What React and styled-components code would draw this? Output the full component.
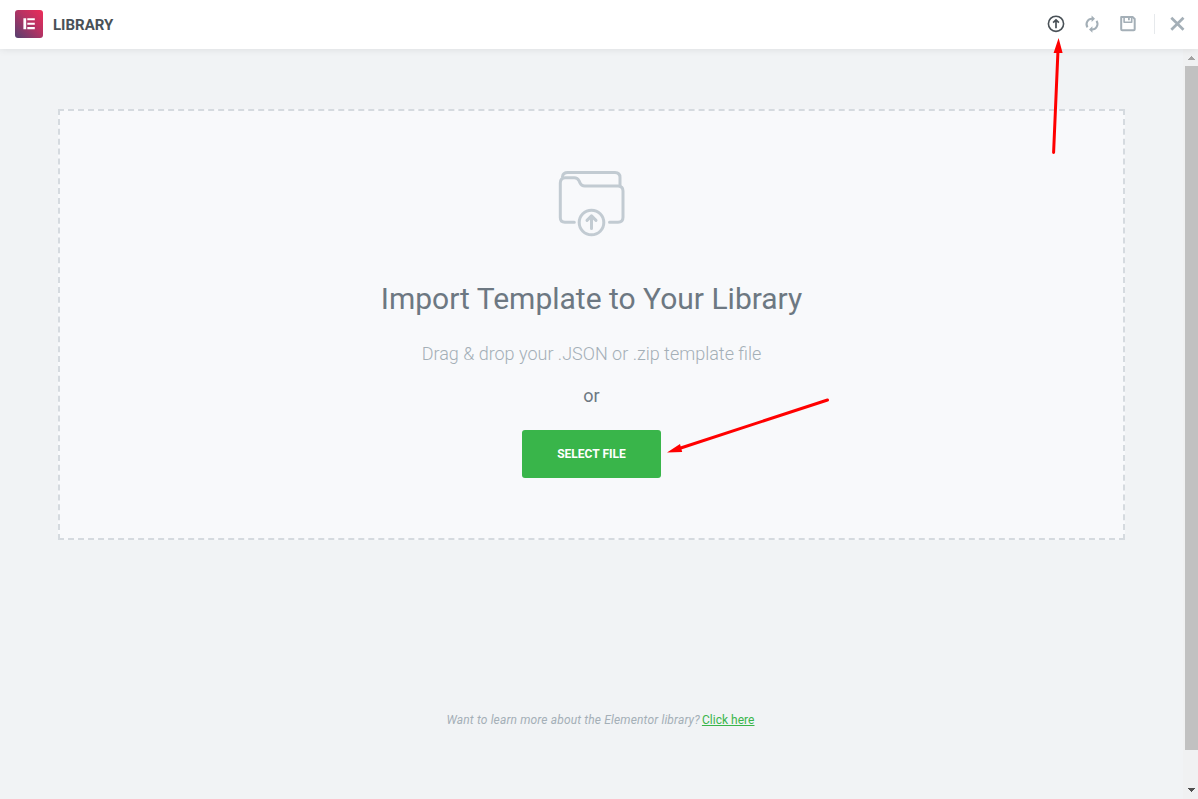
import React from 'react';
import styled, { createGlobalStyle } from 'styled-components';

const GlobalStyle = createGlobalStyle`
  *, *::before, *::after { box-sizing: border-box; }
  body {
    margin: 0;
    overflow: hidden;
    font-family: Roboto, "Liberation Sans", sans-serif;
    background: #f1f3f5;
  }
`;

const Modal = styled.div`
  position: relative;
  display: flex;
  flex-direction: column;
  width: 1198px;
  height: 799px;
  background: #f1f3f5;
`;

const Header = styled.header`
  position: relative;
  z-index: 1;
  display: flex;
  align-items: center;
  flex: 0 0 49px;
  padding: 0 12px 1px 15px;
  background: #fff;
  box-shadow: 0 0 8px rgba(0, 0, 0, 0.1);
`;

const Logo = styled.svg`
  display: block;
  width: 28px;
  height: 28px;
  margin-right: 10px;
`;

const HeaderTitle = styled.span`
  flex: 1;
  padding-top: 2px;
  font-size: 15px;
  font-weight: 700;
  line-height: 18px;
  color: #495157;
`;

const Actions = styled.div`
  display: flex;
  align-items: center;
`;

const ActionButton = styled.button`
  display: flex;
  align-items: center;
  justify-content: center;
  width: ${({ $width = 36 }) => $width}px;
  height: 20px;
  padding: 0;
  border: 0;
  background: none;
  color: ${({ $active }) => ($active ? '#495157' : '#a4afb7')};

  svg { display: block; }
`;

const Divider = styled.span`
  width: 1px;
  height: 20px;
  margin: 0 14px 0 8px;
  background: #e6e9ec;
`;

const Body = styled.div`
  display: flex;
  flex: 1;
  min-height: 0;
`;

const Content = styled.main`
  display: flex;
  flex-direction: column;
  flex: 1;
  padding: 60px 58px 0;
`;

const DropZone = styled.section`
  display: flex;
  flex-direction: column;
  align-items: center;
  height: 431px;
  padding-top: 60px;
  border: 2px dashed #d5dadf;
  background: #f8f9fb;
`;

const FolderIcon = styled.svg`
  display: block;
  width: 68px;
  height: 68px;
`;

const Title = styled.h1`
  margin: 42px 0 0;
  font-size: 30px;
  font-weight: 400;
  line-height: 36px;
  color: #6d7882;
  white-space: nowrap;
`;

const Blurb = styled.p`
  margin: 26px 0 0;
  font-size: 18px;
  font-weight: 300;
  line-height: 22px;
  color: #a4afb7;
`;

const OrLabel = styled.span`
  margin-top: 20px;
  font-size: 18px;
  line-height: 22px;
  color: #6d7882;
`;

const SelectButton = styled.button`
  width: 139px;
  height: 48px;
  margin-top: 23px;
  padding: 0;
  border: 0;
  border-radius: 3px;
  background: #39b54a;
  color: #fff;
  font: 700 12px/48px Roboto, "Liberation Sans", sans-serif;
`;

const Footer = styled.footer`
  display: flex;
  justify-content: center;
  gap: 2px;
  margin-top: 172px;
  padding-left: 18px;
  font-size: 12px;
  line-height: 16px;
  color: #a4afb7;
`;

const FooterHint = styled.em`
  letter-spacing: 0.15px;
`;

const FooterLink = styled.a`
  letter-spacing: 0.03px;
  color: #39b54a;
  text-decoration: underline;
`;

const Scrollbar = styled.div`
  display: flex;
  flex-direction: column;
  align-items: flex-end;
  width: 15px;
  background: #f0f1f2;
`;

const ScrollArrow = styled.svg`
  display: block;
  flex: 0 0 17px;
  width: 13px;
  height: 17px;
`;

const Thumb = styled.div`
  width: 13px;
  height: 684px;
  background: #c1c1c1;
`;

const TrackRest = styled.div`
  flex: 1;
`;

const Annotations = styled.svg`
  position: absolute;
  inset: 0;
  z-index: 2;
  pointer-events: none;
`;

export default function App() {
  return (
    <>
      <GlobalStyle />
      <Modal>
        <Header>
          <Logo viewBox="0 0 28 28">
            <defs>
              <linearGradient id="brand" x1="0" y1="1" x2="1" y2="0">
                <stop offset="0" stopColor="#54406f" />
                <stop offset="0.55" stopColor="#b63263" />
                <stop offset="1" stopColor="#ee2d59" />
              </linearGradient>
            </defs>
            <rect width="28" height="28" rx="3" fill="url(#brand)" />
            <path
              fill="#fff"
              d="M8.4 8.2h2.8v11H8.4zM12.3 8.2h7.5v2.1h-7.5zM12.3 12.7h7.5v2.1h-7.5zM12.3 17.1h7.5v2.1h-7.5z"
            />
          </Logo>
          <HeaderTitle>LIBRARY</HeaderTitle>
          <Actions>
            <ActionButton $active aria-label="Import template">
              <svg width="18" height="18" viewBox="0 0 18 18" fill="none" stroke="currentColor">
                <circle cx="9" cy="8.8" r="7.6" strokeWidth="1.6" />
                <path d="M9 13.2V5.3M6.1 7.7 9 4.9l2.9 2.8" strokeWidth="1.7" />
              </svg>
            </ActionButton>
            <ActionButton aria-label="Sync library">
              <svg width="18" height="18" viewBox="0 0 18 18" fill="none" stroke="currentColor">
                <path d="M4.5 12.4A5.5 5.5 0 0 1 9.5 3.8M13.5 5.9A5.5 5.5 0 0 1 8.5 14.5" strokeWidth="2" />
                <path d="M8.6.5v6.6L12 3.8zM9.4 17.8v-6.6L6 14.5z" fill="currentColor" stroke="none" />
              </svg>
            </ActionButton>
            <ActionButton aria-label="Save">
              <svg width="18" height="18" viewBox="0 0 18 18" fill="none" stroke="currentColor" strokeLinejoin="round">
                <path d="M2.2 2h11.4l2.1 2v10.2q0 1-1 1H3.2q-1 0-1-1V2z" strokeWidth="2" />
                <path d="M5.1 2v5.3h7.6V2" strokeWidth="1.6" />
                <path d="M9.9 2v3.2" strokeWidth="1.8" />
              </svg>
            </ActionButton>
            <Divider />
            <ActionButton $width={17} aria-label="Close">
              <svg width="16" height="16" viewBox="0.5 0 16 16" fill="none" stroke="currentColor" strokeWidth="2.7">
                <path d="m1.8 1.8 12.2 12M14 1.8l-12.2 12" />
              </svg>
            </ActionButton>
          </Actions>
        </Header>
        <Body>
          <Content>
            <DropZone>
              <FolderIcon viewBox="0 0 68 68" fill="none" stroke="#c2cbd2" strokeWidth="3" strokeLinecap="round">
                <path d="M4.5 5.7Q5 1.5 9.7 1.5H57q5 0 5 5v8.4" />
                <path d="M16.3 51.3H7q-4.7 0-4.7-4.7V12q0-5.3 5-5.3h9q3.2 0 4.8 3.2l1 2.2q1.3 2.8 4.6 2.8H60q5 0 5 5v26.4q0 5-5 5h-8.5" />
                <circle cx="33.5" cy="51.5" r="12.3" />
                <path d="M33.5 57.4V45.2M29 49.4l4.5-4.5 4.5 4.5" strokeLinejoin="round" />
              </FolderIcon>
              <Title>Import Template to Your Library</Title>
              <Blurb>Drag &amp; drop your .JSON or .zip template file</Blurb>
              <OrLabel>or</OrLabel>
              <SelectButton>SELECT FILE</SelectButton>
            </DropZone>
            <Footer>
              <FooterHint>Want to learn more about the Elementor library?</FooterHint>
              <FooterLink>Click here</FooterLink>
            </Footer>
          </Content>
          <Scrollbar>
            <ScrollArrow viewBox="0 0 13 17" shapeRendering="crispEdges">
              <path d="M3 11h7L6.5 7z" fill="#a3a3a3" />
            </ScrollArrow>
            <Thumb />
            <TrackRest />
            <ScrollArrow viewBox="0 0 13 17" shapeRendering="crispEdges">
              <path d="M3 6h7l-3.5 4z" fill="#505050" />
            </ScrollArrow>
          </Scrollbar>
        </Body>
        <Annotations width="1198" height="799" fill="#f00" stroke="#f00">
          <path d="M1058 50 1053.6 152.5M680 448.3 827.5 400" strokeWidth="3" strokeLinecap="round" />
          <path d="M1058.6 38 1062.6 53h-9zM667 452.5 680 444l2.2 8z" stroke="none" />
        </Annotations>
      </Modal>
    </>
  );
}
